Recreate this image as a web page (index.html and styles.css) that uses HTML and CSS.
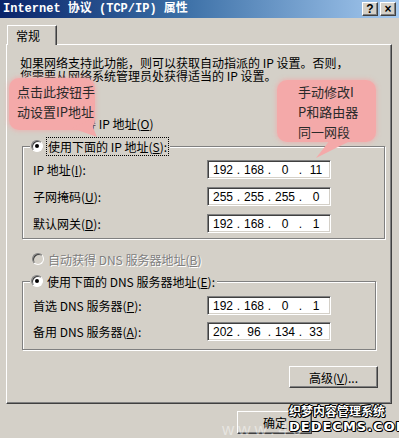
FILE: index.html
```html
<!DOCTYPE html>
<html lang="zh-CN">
<head>
    <meta charset="UTF-8">
    <meta name="viewport" content="width=device-width, initial-scale=1.0">
    <title>Internet 协议 (TCP/IP) 属性</title>
    <link rel="stylesheet" href="styles.css">
</head>
<body>

    <div class="window">
        <div class="titlebar">
            <span class="title">Internet 协议 (TCP/IP) 属性</span>
            <div class="caption-btns">
                <span class="cbtn">?</span>
                <span class="cbtn">×</span>
            </div>
        </div>

        <div class="tabs">
            <div class="tab">常规</div>
        </div>

        <div class="panel">
            <p class="intro">如果网络支持此功能，则可以获取自动指派的 IP 设置。否则，<br>您需要从网络系统管理员处获得适当的 IP 设置。</p>

            <div class="option"><span class="radio"></span><span>自动获得 IP 地址(<u>O</u>)</span></div>

            <fieldset class="group group-ip">
                <legend class="option"><span class="radio checked"></span><span class="focus">使用下面的 IP 地址(<u>S</u>):</span></legend>
                <div class="field">
                    <label>IP 地址(<u>I</u>):</label>
                    <div class="ipbox"><span>192</span><i>.</i><span>168</span><i>.</i><span>0</span><i>.</i><span>11</span></div>
                </div>
                <div class="field">
                    <label>子网掩码(<u>U</u>):</label>
                    <div class="ipbox"><span>255</span><i>.</i><span>255</span><i>.</i><span>255</span><i>.</i><span>0</span></div>
                </div>
                <div class="field">
                    <label>默认网关(<u>D</u>):</label>
                    <div class="ipbox"><span>192</span><i>.</i><span>168</span><i>.</i><span>0</span><i>.</i><span>1</span></div>
                </div>
            </fieldset>

            <div class="option disabled"><span class="radio"></span><span>自动获得 DNS 服务器地址(<u>B</u>)</span></div>

            <fieldset class="group group-dns">
                <legend class="option"><span class="radio checked"></span><span>使用下面的 DNS 服务器地址(<u>E</u>):</span></legend>
                <div class="field">
                    <label>首选 DNS 服务器(<u>P</u>):</label>
                    <div class="ipbox"><span>192</span><i>.</i><span>168</span><i>.</i><span>0</span><i>.</i><span>1</span></div>
                </div>
                <div class="field">
                    <label>备用 DNS 服务器(<u>A</u>):</label>
                    <div class="ipbox"><span>202</span><i>.</i><span>96</span><i>.</i><span>134</span><i>.</i><span>33</span></div>
                </div>
            </fieldset>

            <div class="actions">
                <button class="btn btn-advanced">高级(<u>V</u>)...</button>
            </div>
        </div>

        <div class="footer">
            <button class="btn btn-dialog">确定</button>
        </div>

        <div class="bubble bubble-left">点击此按钮手<br>动设置IP地址</div>
        <div class="bubble bubble-right">手动修改I<br>P和路由器<br>同一网段</div>

        <div class="site-mark">www.46</div>
        <div class="watermark">
            <div class="wm-cn">织梦内容管理系统</div>
            <div class="wm-en">DEDECMS.COM</div>
        </div>
    </div>

</body>
</html>
```

FILE: styles.css
```css
body {
    margin: 0;
    background: #D4D0C8;
    font-family: "Noto Sans CJK SC", "Liberation Sans", sans-serif;
    font-size: 12px;
    color: #000;
}

.window {
    position: relative;
    width: 399px;
    height: 438px;
    overflow: hidden;
    background: #D4D0C8;
}

/* title bar */
.titlebar {
    height: 18px;
    display: flex;
    align-items: center;
    justify-content: space-between;
    background: linear-gradient(to right, #0A246A, #3A6EA5 45%, #A6CAF0);
}

.title {
    padding-left: 3px;
    color: #fff;
    font-family: "Liberation Mono", "Noto Sans CJK SC", monospace;
    font-weight: bold;
    font-size: 12px;
    line-height: 18px;
    white-space: nowrap;
}

.caption-btns {
    display: flex;
    gap: 2px;
    padding-right: 3px;
}

.cbtn {
    width: 16px;
    height: 14px;
    box-sizing: border-box;
    background: #D4D0C8;
    border: 1px solid;
    border-color: #fff #404040 #404040 #fff;
    box-shadow: inset -1px -1px 0 #808080;
    font-family: "Liberation Sans", sans-serif;
    font-weight: bold;
    font-size: 12px;
    line-height: 12px;
    text-align: center;
}

/* tabs */
.tabs {
    display: flex;
    margin-top: 7px;
    padding-left: 7px;
}

.tab {
    position: relative;
    z-index: 1;
    width: 50px;
    height: 20px;
    box-sizing: border-box;
    margin-bottom: -1px;
    padding-left: 8px;
    background: #D4D0C8;
    border: 1px solid;
    border-bottom: none;
    border-color: #fff #404040 #D4D0C8 #fff;
    box-shadow: inset -1px 0 0 #808080;
    line-height: 19px;
}

.panel {
    width: 386px;
    height: 360px;
    box-sizing: border-box;
    margin-left: 6px;
    border: 1px solid;
    border-color: #fff #404040 #404040 #fff;
    box-shadow: inset -1px -1px 0 #808080;
}

.intro {
    margin: 11px 0 0 13px;
    line-height: 13px;
    white-space: nowrap;
}

.option {
    display: flex;
    align-items: center;
    height: 16px;
    margin: 33px 0 0 25px;
    gap: 4px;
    white-space: nowrap;
}

.option.disabled {
    margin-top: 12px;
    color: #808080;
    text-shadow: 1px 1px 0 #fff;
}

.radio {
    width: 12px;
    height: 12px;
    box-sizing: border-box;
    border-radius: 50%;
    background: #fff;
    border: 1px solid;
    border-color: #808080 #fff #fff #808080;
    box-shadow: inset 1px 1px 0 #404040;
    display: flex;
    align-items: center;
    justify-content: center;
}

.radio.checked::after {
    content: "";
    width: 4px;
    height: 4px;
    border-radius: 50%;
    background: #000;
}

.disabled .radio {
    background: #D4D0C8;
}

.focus {
    outline: 1px dotted #000;
    outline-offset: 0;
    padding: 0 1px;
}

/* group boxes */
.group {
    margin: 7px 6px 0 15px;
    padding: 6px 10px 5px 10px;
    border: 1px solid #808080;
    box-shadow: inset 1px 1px 0 #fff, 1px 1px 0 #fff;
    display: flex;
    flex-direction: column;
    gap: 8px;
}

.group legend.option {
    margin: 0 0 0 -3px;
    padding: 0 2px 0 1px;
    background: #D4D0C8;
}

.group-dns {
    margin: 6px 15px 0 15px;
    padding: 7px 10px 8px 10px;
    gap: 7px;
}

.field {
    display: flex;
    align-items: center;
    height: 19px;
}

.field label {
    width: 174px;
    white-space: nowrap;
}

.ipbox {
    width: 124px;
    height: 19px;
    box-sizing: border-box;
    display: flex;
    align-items: center;
    padding-left: 4px;
    background: #fff;
    border: 1px solid;
    border-color: #808080 #fff #fff #808080;
    box-shadow: inset 1px 1px 0 #404040, inset -1px -1px 0 #D4D0C8;
    font-family: "Liberation Sans", sans-serif;
    font-size: 12px;
}

.ipbox span {
    width: 22px;
    text-align: center;
}

.ipbox i {
    width: 9px;
    font-style: normal;
    text-align: center;
}

/* buttons */
.btn {
    height: 22px;
    box-sizing: border-box;
    background: #D4D0C8;
    border: 1px solid;
    border-color: #fff #404040 #404040 #fff;
    box-shadow: inset -1px -1px 0 #808080;
    font-family: "Noto Sans CJK SC", sans-serif;
    font-size: 12px;
    color: #000;
    padding: 0;
}

.actions {
    display: flex;
    justify-content: flex-end;
    margin: 16px 13px 0 0;
}

.btn-advanced {
    width: 89px;
}

.footer {
    display: flex;
    margin: 7px 0 0 237px;
}

.btn-dialog {
    width: 75px;
    height: 23px;
    flex-shrink: 0;
    text-align: left;
    padding-left: 25px;
}

/* annotation bubbles */
.bubble {
    position: absolute;
    background: #F4A9A9;
    border-radius: 10px;
    box-shadow: 0 0 4px 1px rgba(244, 169, 169, 0.7);
    color: #2a2a2a;
    font-size: 13px;
    line-height: 20px;
    white-space: nowrap;
}

.bubble::after {
    content: "";
    position: absolute;
    background: #F4A9A9;
}

.bubble-left {
    left: 9px;
    top: 78px;
    width: 78px;
    height: 48px;
    padding: 4px 0 0 8px;
}

.bubble-left::after {
    left: 63px;
    top: 42px;
    width: 25px;
    height: 17px;
    clip-path: polygon(0 47%, 72% 0, 100% 100%);
}

.bubble-right {
    left: 277px;
    top: 80px;
    width: 78px;
    height: 60px;
    padding: 2px 0 0 21px;
}

.bubble-right::after {
    left: 39px;
    top: 60px;
    width: 36px;
    height: 18px;
    clip-path: polygon(39% 0, 100% 0, 0 100%);
}

/* watermarks */
.site-mark {
    position: absolute;
    left: 222px;
    top: 421px;
    color: rgba(255, 255, 255, 0.45);
    font-family: "Liberation Sans", sans-serif;
    font-size: 17px;
    line-height: 17px;
    letter-spacing: 4px;
    white-space: nowrap;
}

.watermark {
    position: absolute;
    left: 289px;
    top: 404px;
    color: #fff;
    font-weight: bold;
    text-shadow: 1px 0 0 #000, -1px 0 0 #000, 0 1px 0 #000, 0 -1px 0 #000, 1px 1px 0 #000, -1px -1px 0 #000;
    white-space: nowrap;
}

.wm-cn {
    font-size: 12px;
    line-height: 14px;
}

.wm-en {
    font-family: "DejaVu Sans", sans-serif;
    font-size: 13px;
    line-height: 17px;
    letter-spacing: 1px;
}
```
